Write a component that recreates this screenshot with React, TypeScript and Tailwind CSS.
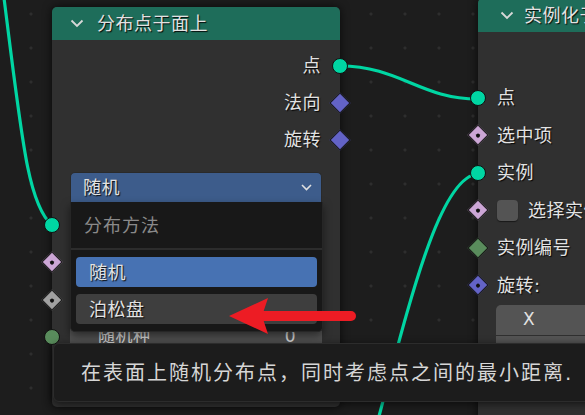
const font = "font-['DejaVu_Sans','Noto_Sans_CJK_SC',sans-serif]";
const shade = '[text-shadow:1px_1px_1px_rgba(0,0,0,0.9)]';

function Chevron({ className }: { className?: string }) {
  return (
    <svg width="14" height="9" viewBox="0 0 14 9" className={className}>
      <polyline points="1.5,1.5 7,7 12.5,1.5" fill="none" stroke="#d8d8d8" strokeWidth="1.8" />
    </svg>
  );
}

function Circle({ color, side }: { color: string; side: 'l' | 'r' }) {
  return (
    <span
      className={`absolute top-1/2 h-[16px] w-[16px] -translate-y-1/2 rounded-full border border-[#111] ${color} ${
        side === 'l' ? 'left-0 -translate-x-1/2' : 'right-0 translate-x-1/2'
      }`}
    />
  );
}

function Diamond({ color, side, dot }: { color: string; side: 'l' | 'r'; dot?: boolean }) {
  return (
    <span
      className={`absolute top-1/2 flex h-[15px] w-[15px] -translate-y-1/2 rotate-45 items-center justify-center border border-[#151515] ${color} ${
        side === 'l' ? 'left-0 -translate-x-1/2' : 'right-0 translate-x-1/2'
      }`}
    >
      {dot && <span className="h-[4px] w-[4px] rounded-full bg-[#111]" />}
    </span>
  );
}

function OutRow({ label, children }: { label: string; children: React.ReactNode }) {
  return (
    <div className={`relative flex h-[37px] items-center justify-end pr-[19px] ${shade}`}>
      <span>{label}</span>
      {children}
    </div>
  );
}

function InRow({ children, sock }: { children?: React.ReactNode; sock: React.ReactNode }) {
  return (
    <div className={`relative flex h-[37.5px] items-center gap-[6px] pl-[19px] ${shade}`}>
      {sock}
      {children}
    </div>
  );
}

export default function App() {
  return (
    <div
      className={`relative h-[415px] w-[585px] overflow-hidden bg-[#1d1d1d] ${font} text-[18px] tracking-[0.5px] text-[#e2e2e2] [background-image:radial-gradient(circle,#2e2e2e_1.3px,transparent_1.8px)] [background-size:34px_34px] [background-position:14px_-3px]`}
    >
      {/* links */}
      <svg className="absolute inset-0" width="585" height="415">
        <g fill="none" stroke="#00d6a3" strokeWidth="3.2" strokeLinecap="round">
          <path d="M4 -2 C 22 140, 28 205, 52 225" />
          <path d="M340 66 C 400 66, 420 99, 478 99" />
          <path d="M478 174 C 440 176, 410 300, 378 420" />
        </g>
      </svg>

      {/* 分布点于面上 */}
      <div className="absolute left-[52px] top-[7px] h-[400px] w-[288px] rounded-[5px] bg-[#303030] shadow-[0_0_10px_rgba(0,0,0,0.7)]">
        <div className={`flex h-[33px] items-center gap-[13px] rounded-t-[5px] bg-[#1e6d5a] pl-[18px] ${shade}`}>
          <Chevron />
          <span>分布点于面上</span>
        </div>
        <div className="pt-[7px]">
          <OutRow label="点">
            <Circle color="bg-[#00d6a3]" side="r" />
          </OutRow>
          <OutRow label="法向">
            <Diamond color="bg-[#6363c7]" side="r" />
          </OutRow>
          <OutRow label="旋转">
            <Diamond color="bg-[#6363c7]" side="r" />
          </OutRow>
          <div className="mx-[18px] mt-[14px] flex h-[30px] items-center justify-between rounded-t-[5px] border border-b-0 border-[#2a2a2a] bg-[#3d5c8b] pl-[12px] pr-[9px]">
            <span className={shade}>随机</span>
            <svg width="11" height="7" viewBox="0 0 11 7">
              <polyline points="1,1 5.5,5.5 10,1" fill="none" stroke="#e0e0e0" strokeWidth="1.6" />
            </svg>
          </div>
          <div className="mt-[4px]">
            <InRow sock={<Circle color="bg-[#00d6a3]" side="l" />} />
            <InRow sock={<Diamond color="bg-[#cca6d6]" side="l" dot />} />
            <InRow sock={<Diamond color="bg-[#a1a1a1]" side="l" dot />} />
            <div className="relative flex h-[37px] items-center">
              <Circle color="bg-[#598c5c]" side="l" />
              <div className="mx-[18px] flex h-[30px] flex-1 items-center justify-between rounded-[4px] bg-[#545454] pl-[28px] pr-[26px] text-[17px]">
                <span>随机种</span>
                <span>0</span>
              </div>
            </div>
          </div>
        </div>
      </div>

      {/* 实例化于点上 */}
      <div className="absolute left-[478px] top-[-2px] h-[425px] w-[220px] rounded-[5px] bg-[#303030] shadow-[0_0_10px_rgba(0,0,0,0.7)]">
        <div className={`flex h-[34px] items-center gap-[10px] rounded-t-[5px] bg-[#1e6d5a] pl-[22px] ${shade}`}>
          <Chevron />
          <span className="whitespace-nowrap">实例化于点上</span>
        </div>
        <div className="pt-[47px]">
          <InRow sock={<Circle color="bg-[#00d6a3]" side="l" />}>
            <span>点</span>
          </InRow>
          <InRow sock={<Diamond color="bg-[#cca6d6]" side="l" dot />}>
            <span>选中项</span>
          </InRow>
          <InRow sock={<Circle color="bg-[#00d6a3]" side="l" />}>
            <span>实例</span>
          </InRow>
          <InRow sock={<Diamond color="bg-[#cca6d6]" side="l" dot />}>
            <span className="h-[21px] w-[21px] rounded-[4px] bg-[#545454] shadow-[0_1px_1px_rgba(0,0,0,0.5)]" />
            <span className="ml-[4px] whitespace-nowrap">选择实例</span>
          </InRow>
          <InRow sock={<Diamond color="bg-[#598c5c]" side="l" />}>
            <span>实例编号</span>
          </InRow>
          <InRow sock={<Diamond color="bg-[#6363c7]" side="l" dot />}>
            <span>旋转:</span>
          </InRow>
          <div className="ml-[18px] flex flex-col gap-[1px] pt-[1px]">
            <div className="flex h-[30px] items-center rounded-t-[5px] bg-[#545454] pl-[27px] text-[17px]">X</div>
            <div className="h-[30px] bg-[#545454]" />
            <div className="h-[30px] rounded-b-[5px] bg-[#545454]" />
          </div>
        </div>
      </div>

      {/* 下拉菜单 */}
      <div className="absolute left-[70px] top-[202px] h-[130px] w-[253px] rounded-b-[5px] border border-t-0 border-[#262626] bg-[#181818] shadow-[0_4px_8px_rgba(0,0,0,0.5)]">
        <div className="flex h-[46px] items-center pl-[13px] tracking-[1px] text-[#8a8a8a]">分布方法</div>
        <div className="h-[2px] bg-[#2c2c2c]" />
        <div className="flex flex-col gap-[7px] px-[5px] pt-[7px]">
          <div className={`flex h-[30px] items-center rounded-[4px] bg-[#4772b3] pl-[13px] ${shade}`}>随机</div>
          <div className={`flex h-[30px] items-center rounded-[4px] bg-[#3e3e3e] pl-[13px] ${shade}`}>泊松盘</div>
        </div>
      </div>

      {/* 提示 */}
      <div className="absolute left-[53px] top-[343px] flex h-[59px] w-[580px] items-center rounded-[6px] border border-[#2c2c2c] bg-[#1c1c1c] pl-[27px] text-[20px] tracking-[2px] text-[#d6d6d6] shadow-[0_2px_8px_rgba(0,0,0,0.6)]">
        在表面上随机分布点，同时考虑点之间的最小距离.
      </div>

      {/* 红色箭头 */}
      <svg className="absolute inset-0" width="585" height="415">
        <line x1="258" y1="316" x2="351" y2="316" stroke="#ed1c24" strokeWidth="10" strokeLinecap="round" />
        <polygon points="229,316 268,298 262,316 268,334" fill="#ed1c24" />
      </svg>
    </div>
  );
}
